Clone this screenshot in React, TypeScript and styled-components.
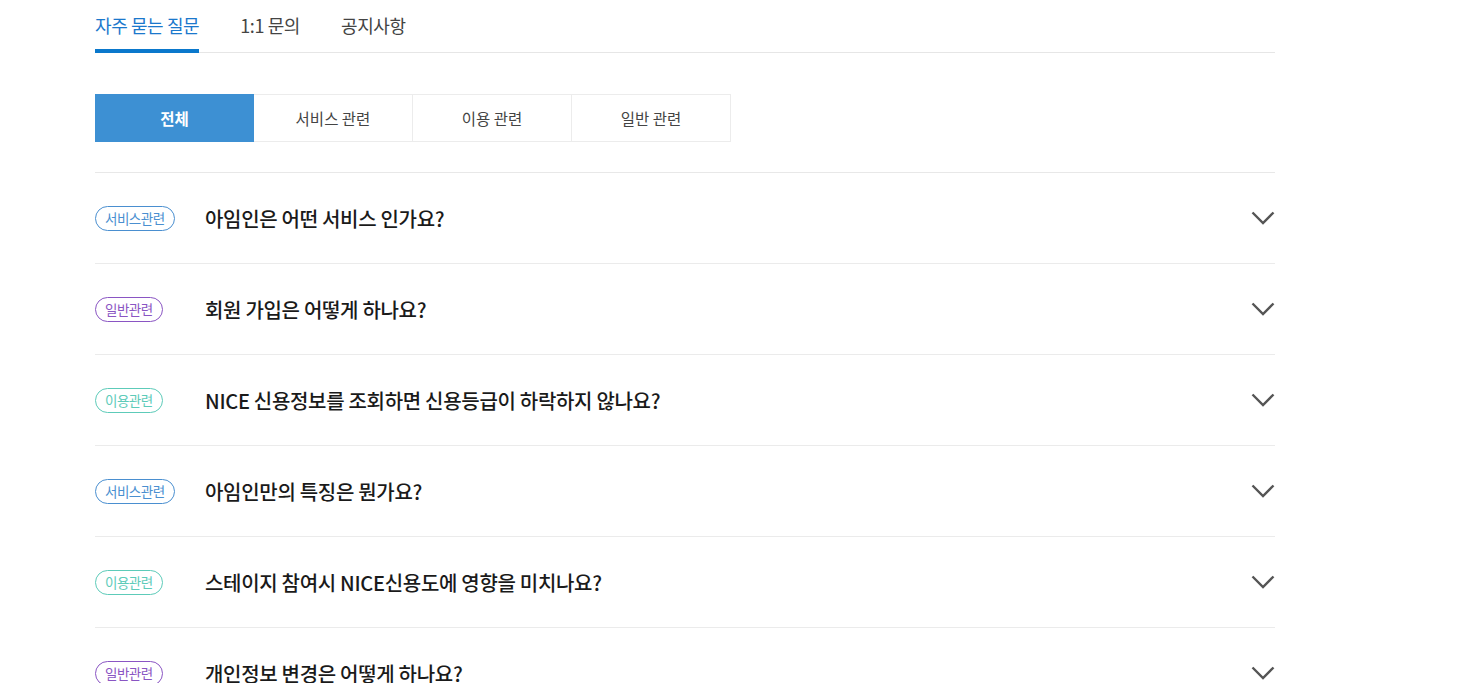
import React from "react";
import styled, { createGlobalStyle } from "styled-components";

const GlobalStyle = createGlobalStyle`
  html, body {
    margin: 0;
    padding: 0;
    background: #fff;
    font-family: "Noto Sans CJK KR", "Noto Sans", sans-serif;
    color: #222;
  }
`;

const Container = styled.div`
  width: 1180px;
  margin-left: 95px;
`;

const TabBar = styled.div`
  display: flex;
  gap: 41px;
  height: 52px;
  border-bottom: 1px solid #e6e6e6;
`;

const Tab = styled.div<{ $active?: boolean }>`
  display: flex;
  align-items: flex-start;
  padding-top: 12px;
  box-sizing: border-box;
  font-size: 18px;
  letter-spacing: -0.4px;
  color: ${(p) => (p.$active ? "#1b78cc" : "#444")};
  border-bottom: 4px solid ${(p) => (p.$active ? "#0a78cc" : "transparent")};
  margin-bottom: -1px;
`;

const CategoryRow = styled.div`
  display: flex;
  margin-top: 41px;
`;

const Category = styled.div<{ $active?: boolean }>`
  width: 159px;
  height: 48px;
  box-sizing: border-box;
  display: flex;
  align-items: center;
  justify-content: center;
  font-size: 15.5px;
  font-weight: ${(p) => (p.$active ? 700 : 400)};
  color: ${(p) => (p.$active ? "#fff" : "#444")};
  background: ${(p) => (p.$active ? "#3d90d3" : "#fff")};
  border: 1px solid ${(p) => (p.$active ? "#3d90d3" : "#ececec")};
  & + & {
    border-left: ${(p) => (p.$active ? "1px solid #3d90d3" : "none")};
  }
`;

const List = styled.div`
  margin-top: 30px;
  border-top: 1px solid #e8e8e8;
`;

const Row = styled.div`
  display: flex;
  align-items: center;
  height: 91px;
  box-sizing: border-box;
  border-bottom: 1px solid #ebebeb;
`;

const TagCell = styled.div`
  width: 110px;
  flex-shrink: 0;
  display: flex;
  align-items: center;
`;

const badgeColors: Record<string, string> = {
  서비스관련: "#4a8fd0",
  일반관련: "#8a55c3",
  이용관련: "#5dcbb9",
};

const Badge = styled.span<{ $color: string }>`
  display: inline-flex;
  align-items: center;
  justify-content: center;
  height: 25px;
  padding: 0 9px;
  box-sizing: border-box;
  border: 1px solid ${(p) => p.$color};
  border-radius: 13px;
  font-size: 13.5px;
  letter-spacing: -0.5px;
  color: ${(p) => p.$color};
`;

const Question = styled.div`
  flex: 1;
  font-size: 20px;
  font-weight: 500;
  color: #1a1a1a;
  letter-spacing: -0.3px;
`;

const Chevron = () => (
  <svg width="24" height="14" viewBox="0 0 24 14" fill="none">
    <path d="M1.5 1.5 L12 12 L22.5 1.5" stroke="#555" strokeWidth="2.4" />
  </svg>
);

const faqs = [
  { tag: "서비스관련", q: "아임인은 어떤 서비스 인가요?" },
  { tag: "일반관련", q: "회원 가입은 어떻게 하나요?" },
  { tag: "이용관련", q: "NICE 신용정보를 조회하면 신용등급이 하락하지 않나요?" },
  { tag: "서비스관련", q: "아임인만의 특징은 뭔가요?" },
  { tag: "이용관련", q: "스테이지 참여시 NICE신용도에 영향을 미치나요?" },
  { tag: "일반관련", q: "개인정보 변경은 어떻게 하나요?" },
];

const App = () => {
  return (
    <Container>
      <GlobalStyle />
      <TabBar>
        <Tab $active>자주 묻는 질문</Tab>
        <Tab>1:1 문의</Tab>
        <Tab>공지사항</Tab>
      </TabBar>
      <CategoryRow>
        <Category $active>전체</Category>
        <Category>서비스 관련</Category>
        <Category>이용 관련</Category>
        <Category>일반 관련</Category>
      </CategoryRow>
      <List>
        {faqs.map((f, i) => (
          <Row key={i}>
            <TagCell>
              <Badge $color={badgeColors[f.tag]}>{f.tag}</Badge>
            </TagCell>
            <Question>{f.q}</Question>
            <Chevron />
          </Row>
        ))}
      </List>
    </Container>
  );
};

export default App;
